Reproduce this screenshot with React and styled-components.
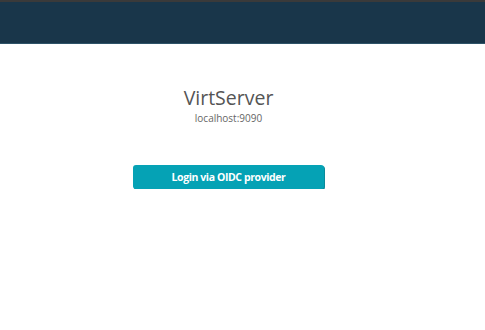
import React from "react";
import styled, { createGlobalStyle } from "styled-components";

const Global = createGlobalStyle`
  html, body { margin: 0; padding: 0; background: #fff; }
  body { font-family: "Open Sans", "Liberation Sans", sans-serif; }
`;

const Header = styled.header`
  height: 41px;
  background: #19364a;
  border-top: 2px solid #3a3a3a;
  border-bottom: 1px solid #2e5368;
`;

const Main = styled.main`
  display: flex;
  flex-direction: column;
  align-items: center;
  width: 457px;
  padding-top: 40px;
`;

const Title = styled.h1`
  margin: 0;
  font-size: 19.5px;
  font-weight: 400;
  line-height: 27px;
  color: #555;
`;

const Host = styled.div`
  font-size: 10px;
  line-height: 14px;
  color: #666;
`;

const LoginButton = styled.button`
  margin-top: 40px;
  width: 191px;
  height: 24px;
  padding: 0;
  border: none;
  border-radius: 3px;
  background: #05a2b5;
  box-shadow: 1px 1px 0 #0a8b9b;
  color: #fff;
  font-family: "Open Sans", sans-serif;
  font-weight: 700;
  font-size: 10.5px;
  letter-spacing: -0.4px;
  cursor: pointer;
`;

export default function App() {
  return (
    <>
      <Global />
      <Header />
      <Main>
        <Title>VirtServer</Title>
        <Host>localhost:9090</Host>
        <LoginButton>Login via OIDC provider</LoginButton>
      </Main>
    </>
  );
}
